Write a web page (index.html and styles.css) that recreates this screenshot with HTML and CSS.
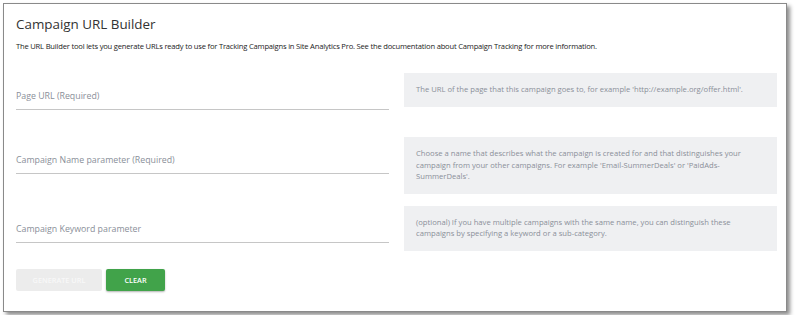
FILE: index.html
```html
<!DOCTYPE html>
<html lang="en">
<head>
<meta charset="utf-8">
<title>Campaign URL Builder</title>
<link rel="stylesheet" href="styles.css">
</head>
<body>
<div class="card">
  <h1 class="title">Campaign URL Builder</h1>
  <p class="intro">The URL Builder tool lets you generate URLs ready to use for Tracking Campaigns in Site Analytics Pro. See the documentation about Campaign Tracking for more information.</p>
  <div class="rows">
    <div class="field"><span class="label">Page URL (Required)</span></div>
    <div class="help">The URL of the page that this campaign goes to, for example 'http://example.org/offer.html'.</div>
    <div class="field"><span class="label">Campaign Name parameter (Required)</span></div>
    <div class="help">Choose a name that describes what the campaign is created for and that distinguishes your campaign from your other campaigns. For example 'Email-SummerDeals' or 'PaidAds-SummerDeals'.</div>
    <div class="field"><span class="label">Campaign Keyword parameter</span></div>
    <div class="help">(optional) If you have multiple campaigns with the same name, you can distinguish these campaigns by specifying a keyword or a sub-category.</div>
  </div>
  <div class="actions">
    <button class="btn btn-disabled">GENERATE URL</button>
    <button class="btn btn-green">CLEAR</button>
  </div>
</div>
</body>
</html>
```
FILE: styles.css
```css
html, body {
  margin: 0;
  padding: 0;
  background: #ffffff;
}
body {
  font-family: "Open Sans", "Noto Sans", sans-serif;
  padding: 3px;
}
.card {
  width: 784px;
  height: 309px;
  box-sizing: border-box;
  border: 1px solid #8a8a8a;
  box-shadow: 3px 3px 4px rgba(0, 0, 0, 0.45);
  background: #fff;
  padding: 11px 9px 0 12px;
}
.title {
  margin: 0;
  font-size: 13.4px;
  line-height: 18px;
  font-weight: 400;
  color: #333;
}
.intro {
  margin: 7px 0 0;
  font-size: 7.6px;
  letter-spacing: -0.2px;
  line-height: 12px;
  color: #222;
}
.rows {
  margin-top: 21px;
  display: grid;
  grid-template-columns: 1fr 1fr;
  column-gap: 15px;
  row-gap: 12px;
  align-items: start;
}
.field {
  height: 52px;
  box-sizing: border-box;
}
.label {
  display: block;
  padding-top: 16px;
  padding-bottom: 6px;
  border-bottom: 1px solid #c6c6c6;
  font-size: 8.8px;
  line-height: 14px;
  color: #8a8f99;
}
.help {
  background: #eff0f2;
  padding: 11px 12px;
  font-size: 7.65px;
  line-height: 11.5px;
  color: #8a8f99;
}
.actions {
  margin-top: 11px;
  display: flex;
  gap: 4px;
}
.btn {
  height: 22px;
  border: none;
  border-radius: 2px;
  font-family: "Open Sans", sans-serif;
  font-size: 7.3px;
  font-weight: 600;
  padding: 0;
  color: #fff;
}
.btn-disabled {
  width: 86px;
  background: #ececec;
  color: #f8f8f8;
}
.btn-green {
  width: 59px;
  background: #41a34a;
  box-shadow: 0 1px 2px rgba(0, 0, 0, 0.3);
}
```
